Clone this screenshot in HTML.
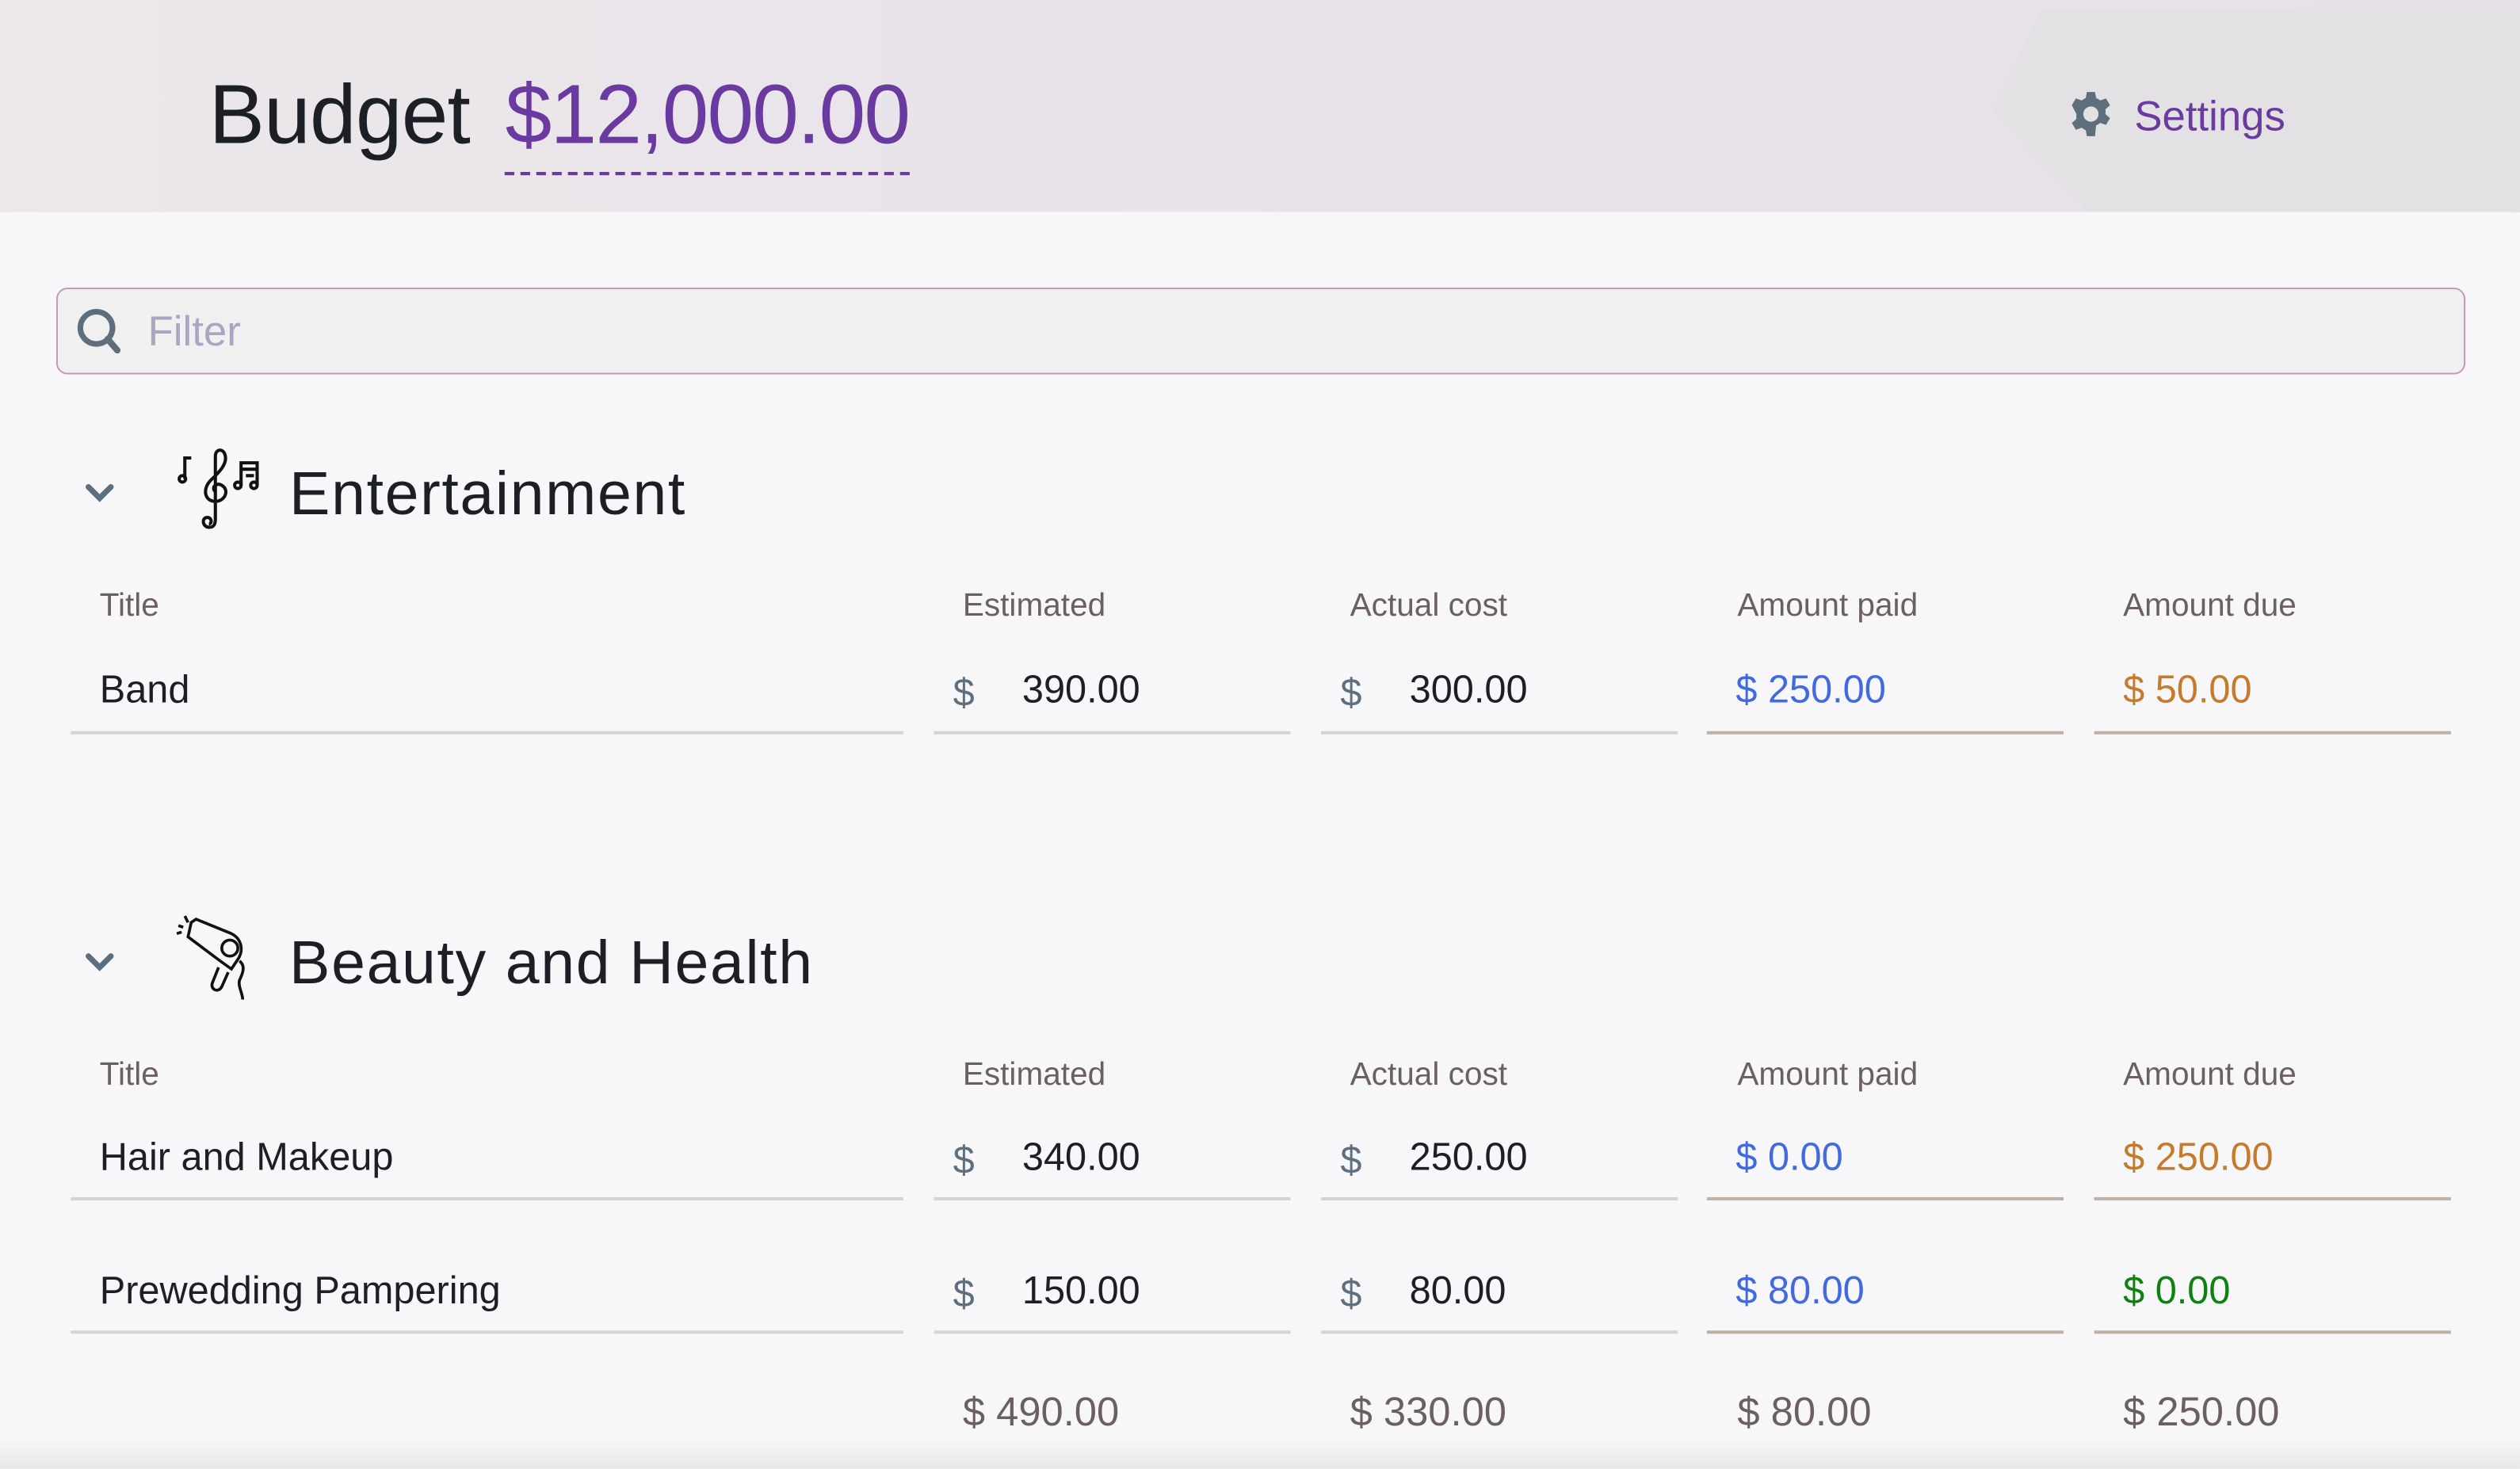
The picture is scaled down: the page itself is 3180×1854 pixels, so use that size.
<!DOCTYPE html>
<html><head><meta charset="utf-8">
<style>
html,body{margin:0;padding:0;width:3180px;height:1854px;overflow:hidden;background:#f7f7f9;}
#w{position:absolute;left:0;top:0;width:1568px;height:914px;transform:scale(2.0281);transform-origin:0 0;font-family:"Liberation Sans",sans-serif;background:#f7f7f9;overflow:hidden;}
.hdr{position:absolute;left:0;top:0;width:1568px;height:132px;background:linear-gradient(90deg,#ebe7ea,#e6e0ea);}
.hdr .grey{position:absolute;left:1240px;top:6px;right:0;height:126px;background:#e3e1e3;clip-path:polygon(30px 0,100% 0,100% 100%,60px 100%,0 50%);}
.body{position:absolute;left:0;top:132px;width:1568px;height:782px;background:#f7f7f9;border-radius:6px 6px 0 0;}
.t{position:absolute;white-space:nowrap;}
.budget{left:130px;top:42px;font-size:52px;color:#1c2026;font-weight:300;letter-spacing:-0.4px;}
.budget span{display:inline-block;color:#6a3aa0;border-bottom:2px dashed #6a3aa0;padding-bottom:4px;margin-left:22px;letter-spacing:-0.9px;line-height:1.15;}
.settings{left:1328px;top:57px;font-size:26px;color:#6a3aa0;}
.filter{position:absolute;left:35px;top:179px;width:1497px;height:52px;border:1.5px solid #c59ab9;border-radius:7px;background:#f0f0f1;}
.filter .ph{position:absolute;left:56px;top:11px;font-size:26px;color:#a8a6c0;}
.sec{font-size:38px;color:#1c2026;letter-spacing:0.8px;font-weight:300;}
.lbl{font-size:20px;color:#6b5f5f;}
.v{font-size:24px;color:#1c2026;}
.d{color:#5e6f80;}
.line{position:absolute;height:2px;}
.g{background:#d6d3d6;}
.b{background:#bfb1a5;}
.tot{font-size:25px;color:#6b5f5f;}
</style></head><body>
<div id="w">
<div class="hdr"><div class="grey"></div></div>
<div class="body"></div>
<div class="t budget">Budget<span>$12,000.00</span></div>
<svg style="position:absolute;left:1286px;top:56px" width="30" height="30" viewBox="0 0 24 24"><path fill="#5d6e7c" d="M10 1h4l.6 3a8 8 0 0 1 2 1.2l2.9-1 2 3.4-2.3 2a8 8 0 0 1 0 2.4l2.3 2-2 3.4-2.9-1a8 8 0 0 1-2 1.2L14 23h-4l-.6-3a8 8 0 0 1-2-1.2l-2.9 1-2-3.4 2.3-2a8 8 0 0 1 0-2.4L2.5 7.6l2-3.4 2.9 1a8 8 0 0 1 2-1.2zM12 8.2a3.8 3.8 0 1 0 0 7.6 3.8 3.8 0 0 0 0-7.6z"/></svg>
<div class="t settings">Settings</div>
<div class="filter"><svg style="position:absolute;left:11px;top:11px" width="30" height="30" viewBox="0 0 30 30"><circle cx="13" cy="13" r="10" fill="none" stroke="#5d6e7c" stroke-width="3.5"/><path d="M20 20l6 7" stroke="#5d6e7c" stroke-width="4" stroke-linecap="round"/></svg><div class="ph">Filter</div></div>

<svg style="position:absolute;left:52px;top:300px" width="20" height="14" viewBox="0 0 20 14"><path d="M3 3l7 7 7-7" fill="none" stroke="#5d6e7c" stroke-width="3.5" stroke-linecap="round"/></svg>
<svg style="position:absolute;left:106px;top:276px" width="58" height="56" viewBox="0 0 58 56" fill="none" stroke="#111" stroke-width="2">
<path d="M9 22V9h4"/><circle cx="7.5" cy="22" r="2"/>
<path d="M25 52c-5 1-6-6-2-6 3 0 3 4 1 4M25 52c2 0 3-2 3-5V8c0-5 5-5 6-1 2 6-5 12-9 16-5 5-4 13 3 13 6 0 9-7 4-10-3-2-7 1-4 4"/>
<path d="M44 26V12h10v14M44 16h10M47 20h5"/><circle cx="42" cy="26" r="2"/><circle cx="52" cy="26" r="2"/>
</svg>
<div class="t sec" style="left:180px;top:287px">Entertainment</div>
<div class="t lbl" style="left:62px;top:366px">Title</div>
<div class="t lbl" style="left:599px;top:366px">Estimated</div>
<div class="t lbl" style="left:840px;top:366px">Actual cost</div>
<div class="t lbl" style="left:1081px;top:366px">Amount paid</div>
<div class="t lbl" style="left:1321px;top:366px">Amount due</div>
<div class="t v" style="left:62px;top:416px">Band</div>
<div class="t v d" style="left:593px;top:418px">$</div><div class="t v" style="left:636px;top:416px">390.00</div>
<div class="t v d" style="left:834px;top:418px">$</div><div class="t v" style="left:877px;top:416px">300.00</div>
<div class="t v" style="left:1080px;top:416px;color:#4169e1">$ 250.00</div>
<div class="t v" style="left:1321px;top:416px;color:#c57a2c">$ 50.00</div>
<div class="line g" style="left:44px;top:455px;width:518px"></div>
<div class="line g" style="left:581px;top:455px;width:222px"></div>
<div class="line g" style="left:822px;top:455px;width:222px"></div>
<div class="line b" style="left:1062px;top:455px;width:222px"></div>
<div class="line b" style="left:1303px;top:455px;width:222px"></div>

<svg style="position:absolute;left:52px;top:592px" width="20" height="14" viewBox="0 0 20 14"><path d="M3 3l7 7 7-7" fill="none" stroke="#5d6e7c" stroke-width="3.5" stroke-linecap="round"/></svg>
<svg style="position:absolute;left:106px;top:568px" width="58" height="56" viewBox="0 0 58 56" fill="none" stroke="#111" stroke-width="1.8">
<path d="M9 2l2 4M5 8l3 1M4 13l3-1"/>
<path d="M13 6l3-2 22 9c6 3 8 10 4 16l-4 6-7-5L11 15z"/>
<circle cx="37" cy="22" r="5"/>
<path d="M30 34l-4 10c-1 4 4 6 6 2l4-9"/><path d="M43 30c4 3 2 8 0 12-1 4 2 8 2 12"/>
</svg>
<div class="t sec" style="left:180px;top:579px">Beauty and Health</div>
<div class="t lbl" style="left:62px;top:658px">Title</div>
<div class="t lbl" style="left:599px;top:658px">Estimated</div>
<div class="t lbl" style="left:840px;top:658px">Actual cost</div>
<div class="t lbl" style="left:1081px;top:658px">Amount paid</div>
<div class="t lbl" style="left:1321px;top:658px">Amount due</div>

<div class="t v" style="left:62px;top:707px">Hair and Makeup</div>
<div class="t v d" style="left:593px;top:709px">$</div><div class="t v" style="left:636px;top:707px">340.00</div>
<div class="t v d" style="left:834px;top:709px">$</div><div class="t v" style="left:877px;top:707px">250.00</div>
<div class="t v" style="left:1080px;top:707px;color:#4169e1">$ 0.00</div>
<div class="t v" style="left:1321px;top:707px;color:#c57a2c">$ 250.00</div>
<div class="line g" style="left:44px;top:745px;width:518px"></div>
<div class="line g" style="left:581px;top:745px;width:222px"></div>
<div class="line g" style="left:822px;top:745px;width:222px"></div>
<div class="line b" style="left:1062px;top:745px;width:222px"></div>
<div class="line b" style="left:1303px;top:745px;width:222px"></div>

<div class="t v" style="left:62px;top:790px">Prewedding Pampering</div>
<div class="t v d" style="left:593px;top:792px">$</div><div class="t v" style="left:636px;top:790px">150.00</div>
<div class="t v d" style="left:834px;top:792px">$</div><div class="t v" style="left:877px;top:790px">80.00</div>
<div class="t v" style="left:1080px;top:790px;color:#4169e1">$ 80.00</div>
<div class="t v" style="left:1321px;top:790px;color:#108010">$ 0.00</div>
<div class="line g" style="left:44px;top:828px;width:518px"></div>
<div class="line g" style="left:581px;top:828px;width:222px"></div>
<div class="line g" style="left:822px;top:828px;width:222px"></div>
<div class="line b" style="left:1062px;top:828px;width:222px"></div>
<div class="line b" style="left:1303px;top:828px;width:222px"></div>

<div class="t tot" style="left:599px;top:865px">$ 490.00</div>
<div class="t tot" style="left:840px;top:865px">$ 330.00</div>
<div class="t tot" style="left:1081px;top:865px">$ 80.00</div>
<div class="t tot" style="left:1321px;top:865px">$ 250.00</div>
<div style="position:absolute;left:0;top:896px;width:1568px;height:18px;background:linear-gradient(#f7f7f9,#e8e6e8)"></div>
</div>
</body></html>
